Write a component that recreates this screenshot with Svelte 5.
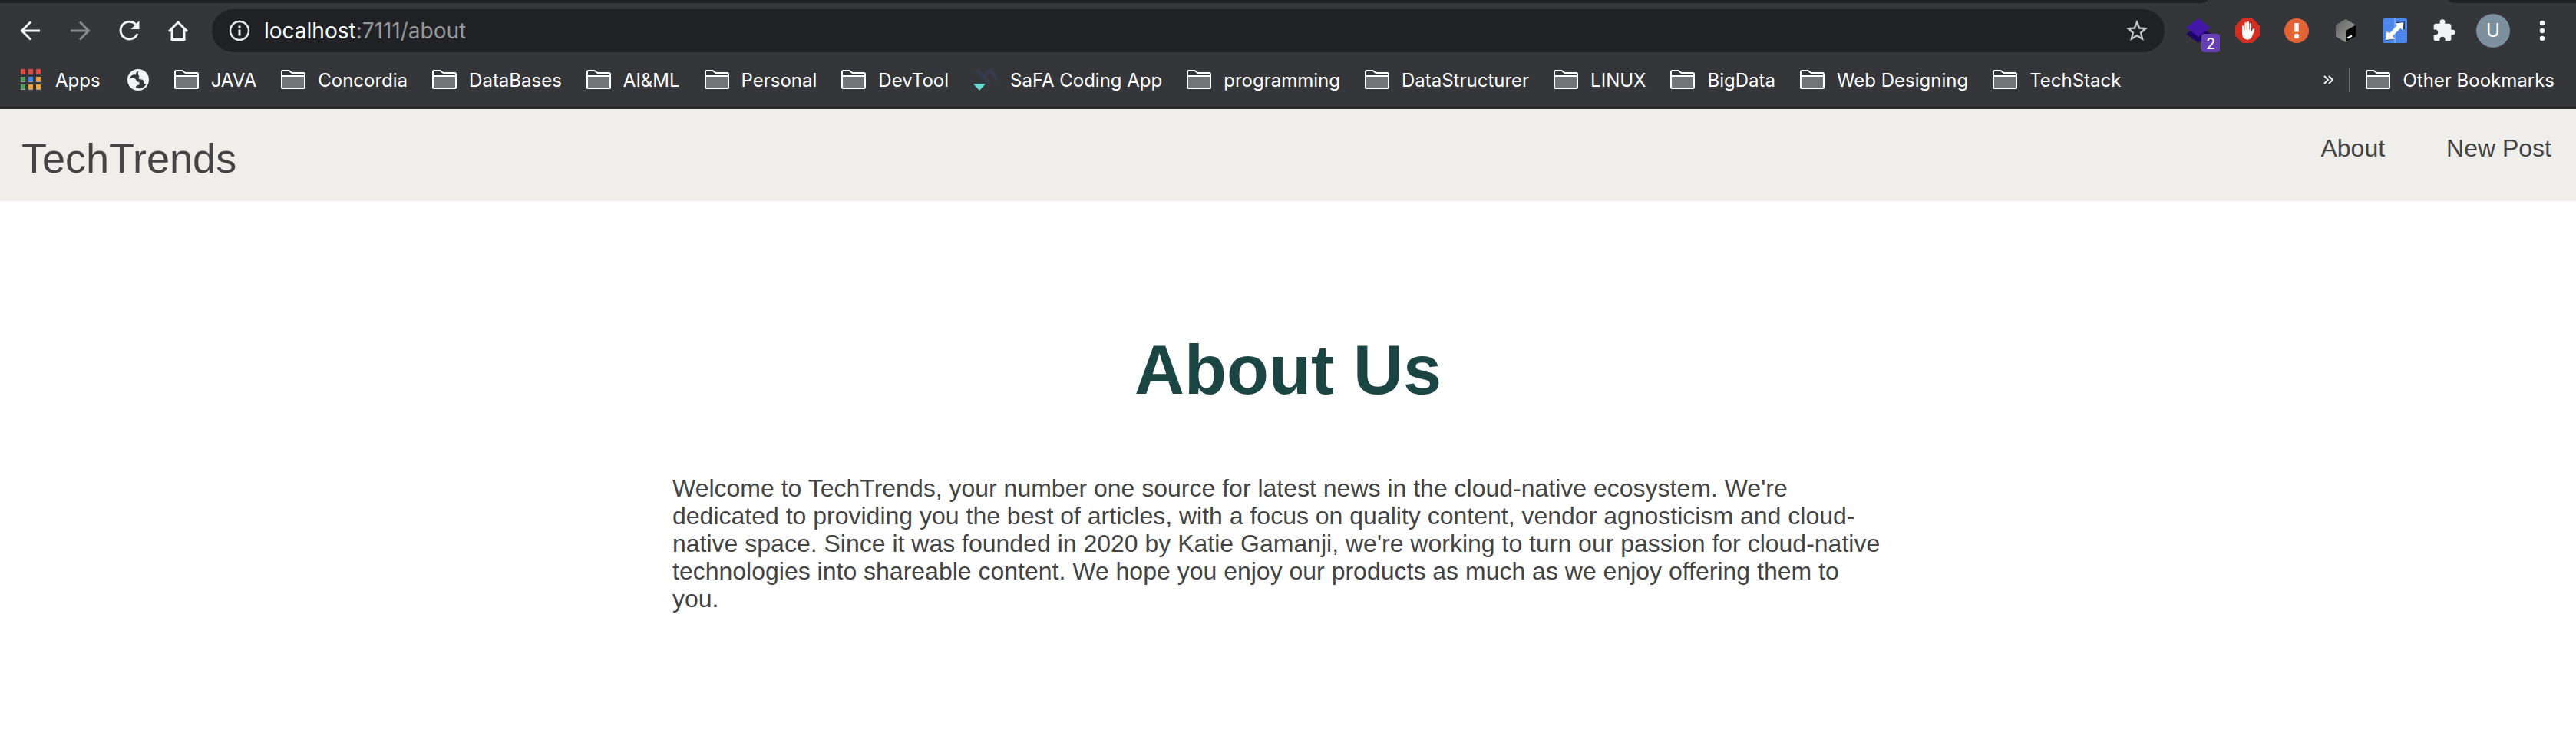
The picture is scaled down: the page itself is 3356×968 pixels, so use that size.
<script>
  const bookmarks = [
    { name: 'JAVA' }, { name: 'Concordia' }, { name: 'DataBases' }, { name: 'AI&ML' },
    { name: 'Personal' }, { name: 'DevTool' }, { name: 'SaFA Coding App', icon: 'safa' },
    { name: 'programming' }, { name: 'DataStructurer' }, { name: 'LINUX' },
    { name: 'BigData' }, { name: 'Web Designing' }, { name: 'TechStack' }
  ];
  const appColors = ['#e8453c', '#e8453c', '#e8453c', '#4f9d58', '#4286f5', '#eaa233', '#4f9d58', '#eaa233', '#eaa233'];
</script>

{#snippet folder()}
  <svg width="32" height="32" viewBox="0 0 32 32" aria-hidden="true">
    <path d="M1 5.500Q1 4 2.500 4H10.500L14.500 7H29.500Q31 7 31 8.500V26Q31 27 30 27H2Q1 27 1 26Z" fill="#35363a" stroke="#fff" stroke-width="2" />
    <path d="M2 12H30V26H2Z" fill="#737477" />
    <path d="M1 11H31" stroke="#fff" stroke-width="2" />
  </svg>
{/snippet}

<div class="browser">
  <div class="tabs"><span class="left"></span><span class="right"></span></div>
  <div class="toolbar">
    <button aria-label="Back"><svg width="32" height="32" viewBox="0 0 32 32"><path d="M28 16H5M16 4.500L4.500 16L16 27.500" fill="none" stroke="#f1f3f4" stroke-width="3" /></svg></button>
    <button aria-label="Forward"><svg width="32" height="32" viewBox="0 0 32 32"><path d="M4 16H27M16 4.500L27.500 16L16 27.500" fill="none" stroke="#87888b" stroke-width="3" /></svg></button>
    <button aria-label="Reload"><svg width="32" height="32" viewBox="0 0 32 32"><path d="M25 8A11.400 11.400 0 1 0 27 20" fill="none" stroke="#f1f3f4" stroke-width="3" /><path d="M29.500 3V14H18.500Z" fill="#f1f3f4" /></svg></button>
    <button aria-label="Home"><svg width="32" height="32" viewBox="0 0 32 32"><path d="M4 17L16 5L28 17M8 14V27.500H24V14" fill="none" stroke="#f1f3f4" stroke-width="3" /></svg></button>
    <div class="omnibox">
      <svg width="32" height="32" viewBox="0 0 32 32" aria-hidden="true"><circle cx="16" cy="16" r="12" fill="none" stroke="#e8eaed" stroke-width="2.500" /><path d="M16 14.500V22.500M16 9.500V12.500" stroke="#e8eaed" stroke-width="3" /></svg>
      <p class="url"><b>localhost</b>:7111/about</p>
      <button class="star" aria-label="Bookmark this page"><svg width="32" height="32" viewBox="0 0 32 32"><path d="M16 5L19.100 12.500L27.300 13.200L21.100 18.500L23 26.500L16 22.200L9 26.500L10.900 18.500L4.700 13.200L12.900 12.500Z" fill="none" stroke="#c2c3c5" stroke-width="2.500" /></svg></button>
    </div>
    <button class="ext" aria-label="Layers, 2 items">
      <svg width="32" height="32" viewBox="0 0 32 32"><path d="M0 20L16 9L32 20L16 32Z" fill="#1f0565" /><path d="M0 12L16 0L32 12L16 24Z" fill="#4217a5" /></svg>
      <span class="count">2</span>
    </button>
    <button aria-label="Ad blocker"><svg width="32" height="32" viewBox="0 0 32 32"><path d="M9.500 0H22.500L32 9.500V22.500L22.500 32H9.500L0 22.500V9.500Z" fill="#d42d22" /><path d="M9 10.500V18C9 24 11 27.500 16 27.500C20 27.500 21.500 25 23 21L25.300 14.500C25.600 13 24 12.300 23.200 13.600L21 17.500V7.500C21 5.600 18.700 5.600 18.700 7.500V14.500H18V5.500C18 3.500 15.500 3.500 15.500 5.500V14.500H14.800V6.500C14.800 4.600 12.400 4.600 12.400 6.500V15.500H11.600V10.500C11.600 8.800 9 8.800 9 10.500Z" fill="#fff" /></svg></button>
    <button aria-label="Alerts"><svg width="32" height="32" viewBox="0 0 32 32"><circle cx="16" cy="16" r="16" fill="#e36436" /><path d="M13.300 6H18.700V17.500H13.300Z" fill="#fff" /><circle cx="16" cy="23" r="3.200" fill="#fff" /></svg></button>
    <button aria-label="Terminal"><svg width="32" height="32" viewBox="0 0 32 32"><defs><linearGradient id="cube" x2="1" y2="1"><stop stop-color="#646464" /><stop offset="1" stop-color="#a2a2a2" /></linearGradient></defs><path d="M16 1L29 8.500V23.500L16 31L3 23.500V8.500Z" fill="url(#cube)" /><path d="M16 16L29 8.500V23.500L16 31Z" fill="#050505" /><path d="M18.500 25.500L24 22.500" stroke="#fff" stroke-width="2.500" /></svg></button>
    <button aria-label="Resize window"><svg width="32" height="32" viewBox="0 0 32 32"><rect width="32" height="32" rx="2" fill="#4b86ea" /><path d="M16 0V32M0 16.500H32" stroke="#a9c6f7" stroke-width="1" /><path d="M18 6L28 5V14M5 17V28L15 26" fill="none" stroke="#111a38" stroke-width="1.500" /><path d="M27.500 5L26.500 15.500L23.500 12.500L13 23L16 26.500L4 28L5.500 16.500L8.700 19.500L19 9L16.500 6.500Z" fill="#fff" /></svg></button>
    <button aria-label="Extensions"><svg width="32" height="32" viewBox="0 0 24 24"><path d="M20.500 11H19V7c0-1.100-.9-2-2-2h-4V3.500a2.500 2.500 0 0 0-5 0V5H4c-1.100 0-1.990.9-1.990 2v3.800H3.500c1.490 0 2.700 1.210 2.700 2.700s-1.210 2.700-2.700 2.700H2V20c0 1.100.9 2 2 2h3.800v-1.500c0-1.490 1.210-2.700 2.700-2.700s2.700 1.210 2.700 2.700V22H17c1.100 0 2-.9 2-2v-4h1.500a2.500 2.500 0 0 0 0-5z" fill="#f1f3f4" /></svg></button>
    <button aria-label="Profile"><span class="avatar">U</span></button>
    <button aria-label="Menu"><svg width="32" height="32" viewBox="0 0 32 32" fill="#f1f3f4"><circle cx="16" cy="6" r="3.200" /><circle cx="16" cy="16" r="3.200" /><circle cx="16" cy="26" r="3.200" /></svg></button>
  </div>
  <nav class="bookmarks" aria-label="Bookmarks">
    <a href="#apps">
      <svg width="32" height="32" viewBox="0 0 32 32" aria-hidden="true">
        {#each appColors as color, i}
          <rect x={3 + (i % 3) * 10} y={2 + Math.floor(i / 3) * 10} width="6" height="7" fill="#a0a0a2" />
          <rect x={3 + (i % 3) * 10} y={2 + Math.floor(i / 3) * 10} width="6" height="6" fill={color} />
        {/each}
      </svg>
      <span>Apps</span>
    </a>
    <a href="#web" aria-label="Web page"><svg width="32" height="32" viewBox="0 0 32 32"><circle cx="17" cy="16" r="14" fill="#f1f3f4" /><path d="M18 4.500C15 5 13.500 7 14 9.500C10 8.500 7 10.500 5.500 14.500C9 13.500 12.500 13.500 14 15.500C14.500 18 16 19 18.500 19V22.500C16 22.500 14 23.500 13.500 26.500C19 28.500 25 26.500 27.500 21.500C25 21.500 24 20.500 24 17.500C23 15.500 21 15 19 15.500C17.500 14.500 17 12.500 18.500 11.500C16.500 9 16 6.500 18 4.500Z" fill="#35363a" /></svg></a>
    {#each bookmarks as item}
      <a href="#{item.name}">
        {#if item.icon}
          <svg width="32" height="32" viewBox="0 0 32 32" aria-hidden="true"><path d="M4 3L22 22M14 11L20 5Q25 4 28 12L31 16" fill="none" stroke="#363b4b" stroke-width="5" /><path d="M0 21H16L8 30Z" fill="#6bd9d0" /></svg>
        {:else}
          {@render folder()}
        {/if}
        <span>{item.name}</span>
      </a>
    {/each}
    <button class="more" aria-label="More bookmarks"><svg width="16" height="16" viewBox="0 0 16 16"><path d="M2 3L7 8L2 13M8 3L13 8L8 13" fill="none" stroke="#f1f3f4" stroke-width="2" /></svg></button>
    <a class="other" href="#other">{@render folder()}<span>Other Bookmarks</span></a>
  </nav>
</div>

<header>
  <a class="brand" href="#home">TechTrends</a>
  <nav class="links" aria-label="Main">
    <a href="#about">About</a>
    <a href="#new">New Post</a>
  </nav>
</header>

<main>
  <h1>About Us</h1>
  <p>Welcome to TechTrends, your number one source for latest news in the cloud-native ecosystem. We're dedicated to providing you the best of articles, with a focus on quality content, vendor agnosticism and cloud-native space. Since it was founded in 2020 by Katie Gamanji, we're working to turn our passion for cloud-native technologies into shareable content. We hope you enjoy our products as much as we enjoy offering them to you.</p>
</main>

<style>
  :global(body) { margin: 0; background: #fff; }
  .browser { background: #35363a; color: #fff; font-family: Inter, Roboto, sans-serif; border-bottom: 2px solid #29292c; }
  .browser svg { display: block; flex: none; }
  button { border: 0; padding: 0; background: none; font: inherit; color: inherit; }
  a { color: inherit; text-decoration: none; }
  .tabs { display: flex; justify-content: space-between; height: 4px; }
  .tabs span { background: #202124; }
  .left { flex: 1; margin-right: 314px; border-bottom-right-radius: 12px 4px; }
  .right { width: 166px; border-bottom-left-radius: 12px 4px; }
  .toolbar { display: flex; align-items: center; height: 72px; padding: 0 12px 0 8px; }
  .toolbar > button { width: 64px; height: 56px; flex: none; display: grid; place-items: center; }
  .omnibox { flex: 1; display: flex; align-items: center; height: 56px; margin: 0 12px; padding: 0 20px; border-radius: 28px; background: #202124; }
  .url { margin: 0 0 0 16px; flex: 1; font-size: 28px; color: #96979a; }
  .url b { font-weight: 400; color: #fff; }
  .toolbar .ext { position: relative; }
  .count { position: absolute; left: 36px; top: 32px; width: 24px; height: 24px; border-radius: 4px; background: #673fb4; font-size: 20px; line-height: 26px; text-align: center; }
  .avatar { width: 44px; height: 44px; border-radius: 50%; background: #7d909d; font-size: 24px; line-height: 44px; }
  .bookmarks { display: flex; align-items: center; gap: 32px; height: 64px; padding: 0 28px 8px 24px; box-sizing: border-box; font-size: 24px; white-space: nowrap; }
  .bookmarks a { display: flex; align-items: center; gap: 16px; }
  .more { margin-left: auto; }
  .bookmarks .other { position: relative; margin-left: 8px; }
  .other::before { content: ''; position: absolute; left: -22px; top: 0; width: 2px; height: 32px; background: #6b6c6f; }
  header { display: flex; justify-content: space-between; height: 120px; padding: 0 32px 0 28px; background: #f0eeea; color: #444; font-family: "Liberation Sans", Arial, sans-serif; }
  .brand { font-size: 54px; line-height: 128px; }
  .links { display: flex; gap: 80px; font-size: 32px; line-height: 102px; }
  main { max-width: 1604px; margin: 0 auto; color: #444; font-family: "Liberation Sans", Arial, sans-serif; }
  h1 { margin: 160px 0 76px; text-align: center; color: #1b4543; font-size: 90px; line-height: 120px; }
  main p { max-width: 1580px; margin: 0; font-size: 32px; line-height: 36px; }
</style>
